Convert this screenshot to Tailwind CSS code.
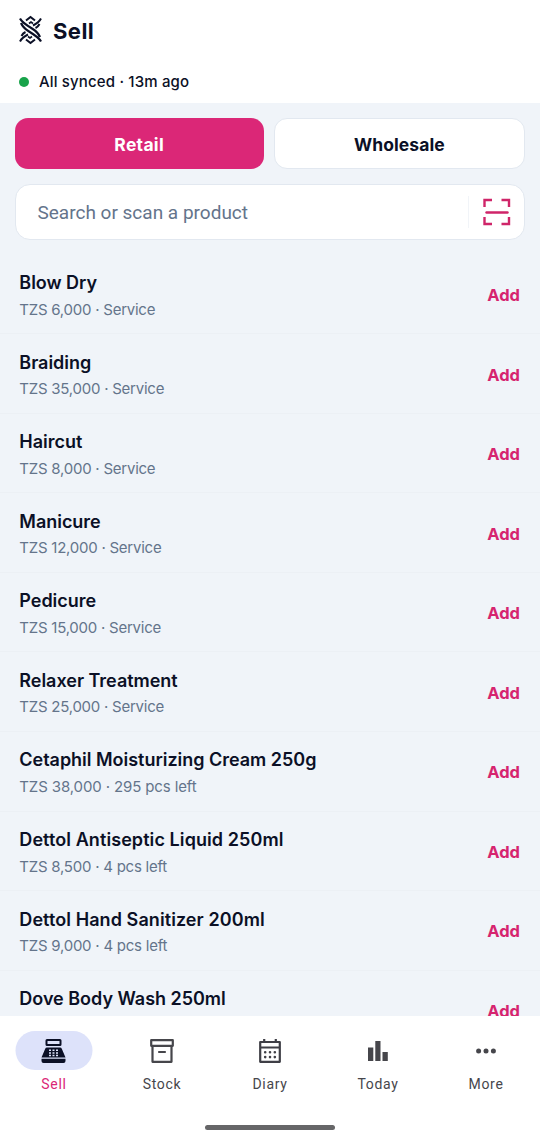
<!DOCTYPE html>
<html lang="en">
<head>
<meta charset="utf-8">
<title>Sell</title>
<script src="https://cdn.jsdelivr.net/npm/@tailwindcss/browser@4"></script>
</head>
<body class="w-[540px] h-[1142px] overflow-hidden bg-[#f0f4f9] font-['Inter',sans-serif] text-[#0b1026] flex flex-col">
<header class="h-[103px] shrink-0 bg-white px-[19px]">
  <div class="flex h-[62px] items-center gap-[11px]">
    <svg class="mt-[-2px]" width="23" height="30" viewBox="0 0 23 30" fill="none" stroke="#0b1026" stroke-width="2">
      <path d="M7 5.500 11.500 2l4.500 3.500M7 24.500l4.500 3.500 4.500-3.500"/>
      <path stroke-width="1.600" d="M10 8.500l2-1.500 2 1.500M9 21.500l2 1.500 2-1.500"/>
      <path d="M22 3.500C20.500 6.500 18 8.500 14 10.500M20.500 9C19.500 11 18.500 12 16.500 13M1 26.500C2.500 23.500 5 21.500 9 19.500M2.500 21C3.500 19 4.500 18 6.500 17"/>
      <path stroke-width="2.200" d="M1 3.500C3 7.500 8 10.500 13 13.500C17 16 19.500 18.500 21 22M2 8C3.500 11.500 6 14 10 16.500C15 19.500 20 22.500 22 26.500"/>
    </svg>
    <h1 class="text-[22px] leading-[28px] font-bold tracking-[0.450px]">Sell</h1>
  </div>
  <div class="flex h-[41px] items-center gap-[10px]">
    <span class="size-[10px] -mt-[2px] rounded-full bg-[#18a34a]"></span>
    <span class="text-[15px] font-medium tracking-[0.160px]">All synced · 13m ago</span>
  </div>
</header>
<main class="flex-1 min-h-0 overflow-hidden">
  <div class="flex gap-[10px] pl-[14.500px] pr-[15px] pt-[15px]">
    <button class="h-[51px] flex-1 rounded-[13px] bg-[#db2777] pt-[3px] text-[17.500px] font-bold tracking-[0.300px] text-white">Retail</button>
    <button class="h-[51px] flex-1 rounded-[13px] border border-[#e2e8f0] bg-white pt-[3px] text-[17.500px] font-bold tracking-[0.100px]">Wholesale</button>
  </div>
  <div class="mx-[15px] mt-[15px] flex h-[56px] items-center rounded-[15px] border border-[#e2e8f0] bg-white pl-[21.500px]">
    <span class="flex-1 pt-[2px] font-['Roboto',sans-serif] text-[19px] text-[#64748b]">Search or scan a product</span>
    <div class="flex h-[32px] w-[56px] items-center justify-center border-l border-[#f1f4f8]">
      <svg width="28" height="28" viewBox="0 0 28 28" fill="none" stroke="#cf2569" stroke-width="2.400"><path d="M1.500 9V2h7.500M18.500 2h7.500v7M26 19v7h-7.500M9 26H1.500v-7"/><path stroke-linecap="round" d="M3.500 14.500h21"/></svg>
    </div>
  </div>
  <ul id="products" class="mt-[14.700px]"></ul>
</main>
<nav class="h-[126px] shrink-0 bg-white font-['Roboto',sans-serif] text-[14px] tracking-[0.700px] text-[#46464b]">
  <div class="grid h-[102px] grid-cols-5 pt-[15px]">
    <div class="flex flex-col items-center text-[#db2777]">
      <span class="flex h-[39px] w-[77px] -translate-x-[0.500px] items-center justify-center rounded-full bg-[#dde2fa]">
        <svg width="26" height="26" viewBox="0 0 26 26" fill="#0b1026"><path fill-rule="evenodd" d="M6.500 1h13q1.500 0 1.500 1.500v4q0 1.500-1.500 1.500h-13Q5 8 5 6.500v-4Q5 1 6.500 1ZM7 3v3h12V3Z"/><path d="M6.500 9.500h13q1.300 0 1.800 1.300L25 19.500H1l3.700-8.700Q5.200 9.500 6.500 9.500ZM1 20.700h24V23q0 2-2 2H3q-2 0-2-2Z"/><path stroke="#dde2fa" stroke-width="1.500" stroke-dasharray="2 1.500" d="M8.500 12.300h9M8.500 15h9M8.500 17.600h9"/></svg>
      </span><span class="mt-[4px] leading-[20px]">Sell</span>
    </div>
    <div class="flex flex-col items-center">
      <span class="flex h-[39px] items-center"><svg width="26" height="26" viewBox="0 0 26 26" fill="none" stroke="#46464b" stroke-width="2.200" stroke-linejoin="round"><path d="M2.200 2.200h21.600v5.600H2.200ZM3.500 8v15.800h19V8M9.200 14h7.600"/></svg></span>
      <span class="mt-[4px] leading-[20px]">Stock</span>
    </div>
    <div class="flex flex-col items-center">
      <span class="flex h-[39px] items-center"><svg width="24" height="26" viewBox="0 0 24 26" fill="none" stroke="#3f3f46" stroke-width="2.200" stroke-linejoin="round"><path d="M2.200 4h19.600v19.800H2.200ZM2.200 9.500h19.600M6.200 1v3M17.800 1v3"/><path stroke-width="2.600" stroke-linecap="round" stroke-dasharray="0.010 4.800" d="M7.200 14.300h10M7.200 19.100h10"/></svg></span>
      <span class="mt-[4px] leading-[20px]">Diary</span>
    </div>
    <div class="flex flex-col items-center">
      <span class="flex h-[39px] items-center"><svg width="20" height="20" viewBox="0 0 20 20" fill="#46464b"><path d="M0 6.500h5.300V20H0ZM7.300 0h5.200v20H7.300ZM14.500 11h5.300v9h-5.300Z"/></svg></span>
      <span class="mt-[4px] leading-[20px]">Today</span>
    </div>
    <div class="flex flex-col items-center">
      <span class="flex h-[39px] items-center"><svg width="20" height="6" viewBox="0 0 20 6" fill="#46464b"><circle cx="2.600" cy="3" r="2.500"/><circle cx="10" cy="3" r="2.500"/><circle cx="17.400" cy="3" r="2.500"/></svg></span>
      <span class="mt-[4px] leading-[20px]">More</span>
    </div>
  </div>
  <div class="mx-auto mt-[7px] h-[5px] w-[130px] rounded-full bg-[#666668]"></div>
</nav>
<script>
const items = [
  ['Blow Dry', 'TZS 6,000 · Service'],
  ['Braiding', 'TZS 35,000 · Service'],
  ['Haircut', 'TZS 8,000 · Service'],
  ['Manicure', 'TZS 12,000 · Service'],
  ['Pedicure', 'TZS 15,000 · Service'],
  ['Relaxer Treatment', 'TZS 25,000 · Service'],
  ['Cetaphil Moisturizing Cream 250g', 'TZS 38,000 · 295 pcs left'],
  ['Dettol Antiseptic Liquid 250ml', 'TZS 8,500 · 4 pcs left'],
  ['Dettol Hand Sanitizer 200ml', 'TZS 9,000 · 4 pcs left'],
  ['Dove Body Wash 250ml', '&nbsp;']
];
document.getElementById('products').innerHTML = items.map(([name, detail]) => `
  <li class="flex h-[79.560px] items-center justify-between border-b border-[#ecf0f5] pl-[19.300px] pr-[20px]">
    <div class="pt-[4px]">
      <div class="text-[18px] leading-[26px] font-semibold ${name.startsWith('Dettol') ? 'tracking-[0.080px]' : 'tracking-[-0.020px]'}">${name}</div>
      <div class="mt-[1.500px] text-[15px] leading-[24px] ${detail.includes('295') ? 'tracking-[-0.120px]' : 'tracking-[-0.240px]'} text-[#64748b]">${detail}</div>
    </div>
    <button class="pt-[3px] text-[16.500px] font-bold text-[#d6246f]">Add</button>
  </li>`).join('');
</script>
</body>
</html>
